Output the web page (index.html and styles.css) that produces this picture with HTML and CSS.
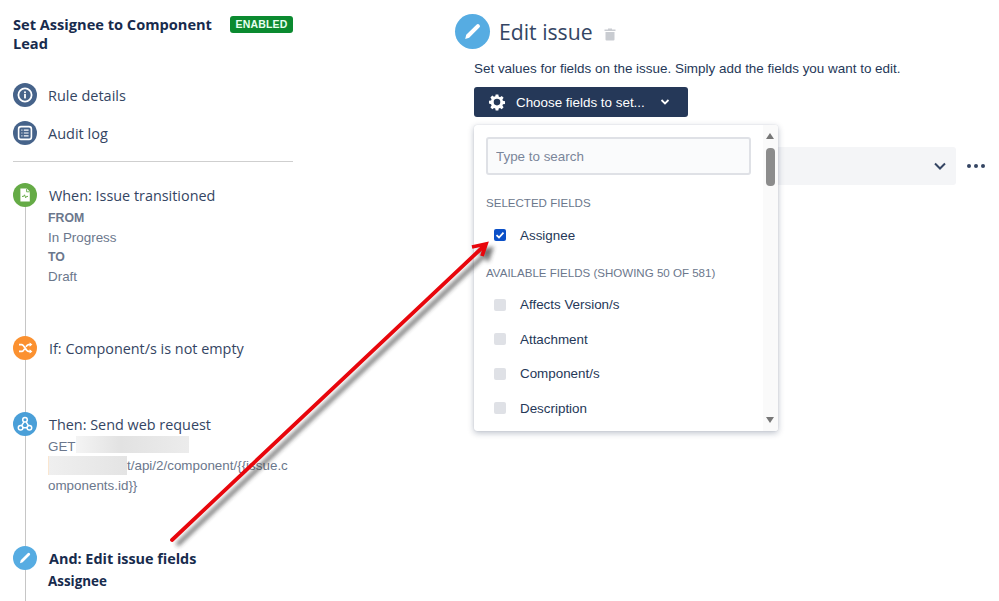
FILE: index.html
```html
<!DOCTYPE html>
<html lang="en">
<head>
<meta charset="utf-8">
<title>Edit issue</title>
<link rel="stylesheet" href="styles.css">
</head>
<body>
<div class="page">
  <aside class="left">
    <header class="rule-head">
      <h1 class="rule-title">Set Assignee to Component Lead</h1>
      <span class="badge">ENABLED</span>
    </header>
    <nav class="nav">
      <a class="nav-item">
        <span class="dot dot-slate"><svg viewBox="0 0 24 24" class="ico"><circle cx="12" cy="12" r="6.6" fill="none" stroke="#fff" stroke-width="1.8"/><rect x="11.1" y="11" width="1.8" height="4.4" fill="#fff"/><rect x="11.1" y="8.4" width="1.8" height="1.8" fill="#fff"/></svg></span>
        Rule details
      </a>
      <a class="nav-item">
        <span class="dot dot-slate"><svg viewBox="0 0 24 24" class="ico"><rect x="5.6" y="5.6" width="12.8" height="12.8" rx="2.4" fill="none" stroke="#fff" stroke-width="1.6"/><path d="M8.4 9.2h1M10.8 9.2h4.8M8.4 12h1M10.8 12h4.8M8.4 14.8h1M10.8 14.8h4.8" stroke="#fff" stroke-width="1.2"/></svg></span>
        Audit log
      </a>
    </nav>
    <div class="timeline">
      <section class="step step-when">
        <div class="rail"><span class="dot dot-green"><svg viewBox="0 0 24 24" class="ico"><path d="M7.4 5.6h6.4l3 3v9.8H7.4z" fill="#fff"/><path d="M9 13.4h1.6l.9-1.6 1.2 3 .9-1.4H15" fill="none" stroke="#65ab46" stroke-width="1"/><path d="M13.6 5.8v3h3" fill="none" stroke="#65ab46" stroke-width=".9"/></svg></span></div>
        <div class="step-body">
          <h2 class="step-title">When: Issue transitioned</h2>
          <p class="meta meta-key">FROM</p>
          <p class="meta">In Progress</p>
          <p class="meta meta-key">TO</p>
          <p class="meta">Draft</p>
        </div>
      </section>
      <section class="step step-if">
        <div class="rail"><span class="dot dot-orange"><svg viewBox="0 0 24 24" class="ico"><path d="M6 8.6h2.6c3 0 4 6.8 7 6.8H18M6 15.4h2.6c1.300 0 2.200-1.200 3-2.600M13 10.700c.7-1.200 1.500-2.100 2.600-2.100H18" fill="none" stroke="#fff" stroke-width="1.700"/><path d="M16.600 6.400 19.400 8.600 16.600 10.800zM16.600 13.200 19.400 15.400 16.600 17.600z" fill="#fff"/></svg></span></div>
        <div class="step-body">
          <h2 class="step-title">If: Component/s is not empty</h2>
        </div>
      </section>
      <section class="step step-then">
        <div class="rail"><span class="dot dot-blue"><svg viewBox="0 0 24 24" class="ico"><g fill="none" stroke="#fff" stroke-width="1.500"><circle cx="12" cy="7.800" r="2.300"/><circle cx="7.600" cy="15.800" r="2.300"/><circle cx="16.400" cy="15.800" r="2.300"/><path d="M11 9.900 8.600 13.700M13.100 9.900l2.300 3.800M9.900 15.800h4.200"/></g></svg></span></div>
        <div class="step-body">
          <h2 class="step-title">Then: Send web request</h2>
          <p class="meta meta-url">GET<span class="redact redact-a"></span><br><span class="redact redact-b"></span>t/api/2/component/{{issue.c<br>omponents.id}}</p>
        </div>
      </section>
      <section class="step step-and">
        <div class="rail"><span class="dot dot-sky"><svg viewBox="0 0 24 24" class="ico"><path d="M7 17.200 7.700 14.300 14.700 7.300a1.400 1.400 0 0 1 2 0 1.400 1.400 0 0 1 0 2L9.700 16.300z" fill="#fff"/></svg></span></div>
        <div class="step-body">
          <h2 class="step-title step-title-bold">And: Edit issue fields</h2>
          <p class="assignee">Assignee</p>
        </div>
      </section>
    </div>
  </aside>

  <main class="right">
    <header class="edit-head">
      <span class="dot dot-sky dot-large"><svg viewBox="0 0 24 24" class="ico"><path d="M7 17.200 7.700 14.300 14.700 7.300a1.400 1.400 0 0 1 2 0 1.400 1.400 0 0 1 0 2L9.700 16.300z" fill="#fff"/></svg></span>
      <h2 class="edit-title">Edit issue</h2>
      <svg class="trash" viewBox="0 0 12 14"><path d="M4 1.500h4v1h3.500v1.500H.5V2.500H4zM1.500 5h9v7.500a1 1 0 0 1-1 1h-7a1 1 0 0 1-1-1z" fill="#c9ccd1"/></svg>
    </header>
    <div class="edit-content">
      <p class="desc">Set values for fields on the issue. Simply add the fields you want to edit.</p>
      <div class="picker">
        <button class="choose" type="button">
          <svg class="gear" viewBox="0 0 24 24"><path d="M10.200 2h3.600l.5 2.800 1.700.7 2.300-1.600 2.500 2.500-1.600 2.300.7 1.700 2.800.5v3.600l-2.800.5-.7 1.700 1.600 2.300-2.500 2.500-2.300-1.600-1.700.7-.5 2.800h-3.600l-.5-2.800-1.700-.7-2.300 1.600-2.500-2.500 1.600-2.300-.7-1.700L1.300 14v-3.600l2.800-.5.7-1.700-1.600-2.300 2.500-2.500 2.300 1.600 1.700-.7zM12 7.700a4.400 4.400 0 1 0 0 8.800 4.400 4.400 0 0 0 0-8.800z" fill="#fff" fill-rule="evenodd"/></svg>
          <span>Choose fields to set...</span>
          <svg class="chev-small" viewBox="0 0 10 8"><path d="M1.500 2 5 5.500 8.500 2" fill="none" stroke="#fff" stroke-width="1.800"/></svg>
        </button>
        <div class="menu">
          <div class="menu-list">
            <input class="search" type="text" placeholder="Type to search">
            <h3 class="group group-selected">SELECTED FIELDS</h3>
            <div class="option"><span class="check check-on"><svg viewBox="0 0 12 12"><path d="M2.500 6.200 5 8.500 9.500 3.700" fill="none" stroke="#fff" stroke-width="1.800"/></svg></span>Assignee</div>
            <h3 class="group group-available">AVAILABLE FIELDS (SHOWING 50 OF 581)</h3>
            <div class="option"><span class="check"></span>Affects Version/s</div>
            <div class="option"><span class="check"></span>Attachment</div>
            <div class="option"><span class="check"></span>Component/s</div>
            <div class="option"><span class="check"></span>Description</div>
          </div>
          <div class="scrollbar">
            <span class="arrow arrow-up"></span>
            <span class="thumb"></span>
            <span class="arrow arrow-down"></span>
          </div>
        </div>
      </div>
      <div class="field-row">
        <div class="field">
          <svg class="chev" viewBox="0 0 14 10"><path d="M2 2.500 7 7.500 12 2.500" fill="none" stroke="#344563" stroke-width="2"/></svg>
        </div>
        <div class="more"><i></i><i></i><i></i></div>
      </div>
    </div>
  </main>
</div>

<svg class="annotation" width="999" height="601" viewBox="0 0 999 601">
  <defs>
    <filter id="arrow-shadow" x="-10%" y="-10%" width="120%" height="120%">
      <feGaussianBlur stdDeviation="2"/>
    </filter>
  </defs>
  <g filter="url(#arrow-shadow)" opacity=".7" transform="translate(5 5)" fill="none" stroke="#333" stroke-width="3.800">
    <path d="M172 540 485 245M472 247 486 244 482 256"/>
  </g>
  <g fill="none" stroke="#e8060c" stroke-width="3.800" stroke-linecap="round">
    <path d="M172 540 485 245"/>
    <path d="M472 247 486 244 482 256" stroke-linejoin="miter" stroke-linecap="butt"/>
  </g>
</svg>
</body>
</html>
```

FILE: styles.css
```css
* { box-sizing: border-box; }
html, body { margin: 0; height: 601px; overflow: hidden; background: #fff; }
body { font-family: "Liberation Sans", Arial, sans-serif; color: #172b4d; position: relative; }
h1, h2, h3, p { margin: 0; font-weight: normal; }

.page { display: flex; height: 601px; overflow: hidden; }

.left { width: 280px; margin-left: 13px; flex: none; font-family: "Open Sans", sans-serif; }
.rule-head { display: flex; align-items: flex-start; gap: 12px; padding-top: 15px; height: 83px; }
.rule-title { font-size: 14.600px; line-height: 19px; font-weight: 700; color: #172b4d; width: 205px; flex: none; }
.badge { margin-top: 1px; width: 63px; height: 17px; background: #0b8a30; color: #e8fff0; border-radius: 3px; font: 700 10.500px/17px "Liberation Sans", sans-serif; text-align: center; letter-spacing: .2px; }

.nav { display: flex; flex-direction: column; gap: 14px; height: 78px; }
.nav-item { display: flex; align-items: center; gap: 11px; height: 24px; font-size: 14.500px; color: #344563; }
.dot { width: 24px; height: 24px; border-radius: 50%; display: block; flex: none; }
.dot-slate { background: #46638a; }
.dot-green { background: #65ab46; }
.dot-orange { background: #fb9130; }
.dot-blue { background: #4a9fd8; }
.dot-sky { background: #56ace2; }
.ico { width: 100%; height: 100%; display: block; }

.timeline { border-top: 1px solid #cfcfcf; padding-top: 21px; }
.step { display: flex; gap: 12px; }
.step-when { height: 153px; }
.step-if { height: 76px; }
.step-then { height: 134px; }
.step-and { height: 80px; }
.rail { width: 24px; flex: none; display: flex; flex-direction: column; align-items: center; background: linear-gradient(#c6c6c6, #c6c6c6) 12px 0 / 1px 100% no-repeat; }
.step-body { flex: 1; min-width: 0; padding-top: 1px; }
.step-title { font-size: 14.400px; line-height: 24px; color: #344563; }
.step-title-bold { font-weight: 700; color: #172b4d; }
.meta { font: 13.400px/19.400px "Liberation Sans", sans-serif; color: #6b778c; margin-left: -1px; }
.meta-key { font-weight: 700; font-size: 12.300px; }
.step-when .step-title { margin-bottom: 1px; }
.meta-url { white-space: nowrap; }
.redact { display: inline-block; vertical-align: top; }
.redact-a { width: 113px; height: 17px; margin-top: -1px; background: linear-gradient(90deg, #f4f4f4, #e2e2e2 40%, #ececec 100%); }
.redact-b { width: 79px; height: 19px; background: linear-gradient(90deg, #efefef, #e4e4e4); border-left: 1px solid #fae6d0; }
.assignee { font-size: 13.400px; line-height: 19px; font-weight: 700; margin-left: -1px; margin-top: 1px; color: #172b4d; }

.right { margin-left: 162px; flex: 1; min-width: 0; }
.edit-head { display: flex; align-items: center; height: 34px; margin-top: 14px; margin-bottom: 13px; }
.dot-large { width: 35px; height: 35px; }
.edit-title { font-family: "Open Sans", sans-serif; font-size: 21.200px; line-height: 34px; color: #344563; margin-left: 9px; padding-top: 2px; }
.trash { width: 12px; height: 14px; margin-left: 11px; margin-top: 5px; }
.edit-content { margin-left: 19px; width: 526px; }
.desc { font-size: 13.450px; line-height: 16px; color: #253858; margin-bottom: 10px; }

.picker { position: relative; height: 30px; margin-bottom: 30px; }
.choose { width: 214px; height: 30px; background: #253858; color: #fff; border: 0; border-radius: 3px; padding: 0 0 0 14px; display: flex; align-items: center; font: 13.400px "Liberation Sans", sans-serif; }
.gear { width: 18px; height: 18px; margin-right: 10px; flex: none; }
.chev-small { width: 10px; height: 8px; margin-left: 15px; }
.menu { position: absolute; left: 0; top: 38px; width: 304px; height: 306px; background: #fff; border-radius: 3px; box-shadow: 0 2px 6px rgba(9, 30, 66, .28), 0 0 1px rgba(9, 30, 66, .2); display: flex; z-index: 2; }
.menu-list { width: 289px; flex: none; padding: 12px 0 0 12px; }
.search { width: 265px; height: 38px; background: #fafbfc; border: 2px solid #dfe1e6; border-radius: 3px; padding: 0 8px; font: 13.400px "Liberation Sans", sans-serif; display: block; }
.search::placeholder { color: #7a869a; opacity: 1; }
.group { font-size: 11.550px; line-height: 14px; color: #6b778c; }
.group-selected { margin-top: 21px; }
.group-available { margin-top: 13px; margin-bottom: 8px; }
.option { display: flex; align-items: center; height: 34.500px; padding-left: 8px; font-size: 13.400px; color: #253858; }
.group-selected + .option { margin-top: 8px; }
.check { width: 12px; height: 12px; border-radius: 2px; background: #dfe1e6; margin-right: 14px; flex: none; display: block; }
.check svg { display: block; width: 12px; height: 12px; }
.check-on { background: #0b50c8; }
.scrollbar { width: 15px; flex: none; background: #fafafa; position: relative; border-radius: 0 3px 3px 0; }
.arrow { position: absolute; left: 3px; width: 0; height: 0; border-left: 4.500px solid transparent; border-right: 4.500px solid transparent; }
.arrow-up { top: 8px; border-bottom: 6px solid #777; }
.arrow-down { bottom: 8px; border-top: 6px solid #777; }
.thumb { position: absolute; left: 3px; top: 23px; width: 9px; height: 38px; border-radius: 4px; background: #8c8c8c; }

.field-row { display: flex; align-items: center; }
.field { width: 482px; height: 38px; background: #f4f5f7; border-radius: 3px; display: flex; align-items: center; justify-content: flex-end; padding-right: 9px; flex: none; }
.chev { width: 14px; height: 10px; }
.more { display: flex; gap: 3px; margin-left: 11px; }
.more i { width: 4px; height: 4px; border-radius: 50%; background: #344563; display: block; }

.annotation { position: absolute; left: 0; top: 0; pointer-events: none; z-index: 5; }
```
